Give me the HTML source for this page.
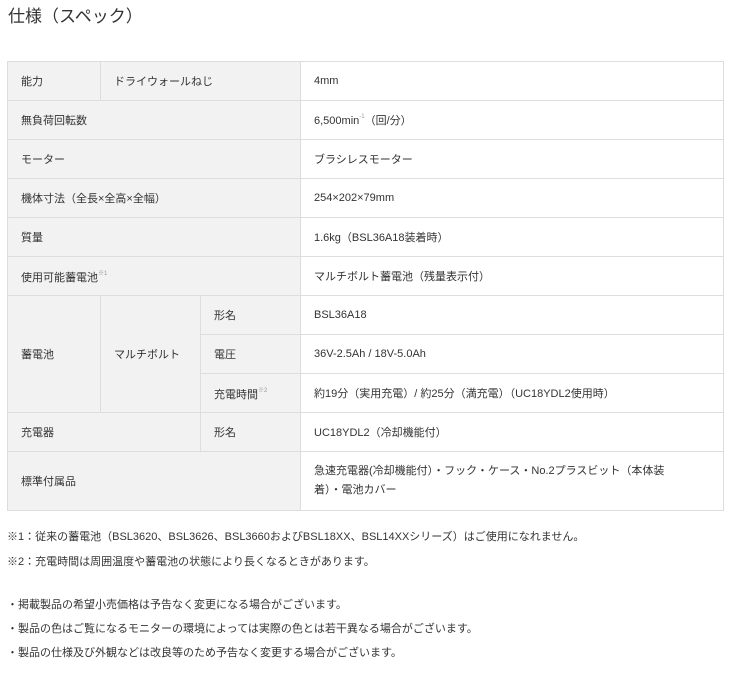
<!DOCTYPE html>
<html><head><meta charset="utf-8"><style>
body{margin:0;width:730px;height:673px;background:#fff;font-family:"Liberation Sans","Noto Sans CJK JP",sans-serif;color:#333;position:relative;overflow:hidden}
.t{position:absolute;left:8px;top:2px;font-size:17px;color:#333}
table{position:absolute;left:7px;top:61px;width:717px;border-collapse:collapse;font-size:11px;table-layout:fixed}
td{border:1px solid #ddd;padding:0 0 0 13px;height:38px;vertical-align:middle}
td.h{background:#f2f2f2}
sup{font-size:6px;color:#999;vertical-align:6px}
.n{position:absolute;left:7px;font-size:11px;white-space:nowrap}
</style></head><body>
<div class="t">仕様（スペック）</div>
<table>
<colgroup><col style="width:93px"><col style="width:100px"><col style="width:100px"><col></colgroup>
<tr><td class="h">能力</td><td class="h" colspan="2">ドライウォールねじ</td><td>4mm</td></tr>
<tr><td class="h" colspan="3">無負荷回転数</td><td>6,500min<sup>-1</sup>（回/分）</td></tr>
<tr><td class="h" colspan="3">モーター</td><td>ブラシレスモーター</td></tr>
<tr><td class="h" colspan="3">機体寸法（全長×全高×全幅）</td><td>254×202×79mm</td></tr>
<tr><td class="h" colspan="3">質量</td><td>1.6kg（BSL36A18装着時）</td></tr>
<tr><td class="h" colspan="3">使用可能蓄電池<sup>※1</sup></td><td>マルチボルト蓄電池（残量表示付）</td></tr>
<tr><td class="h" rowspan="3">蓄電池</td><td class="h" rowspan="3">マルチボルト</td><td class="h">形名</td><td>BSL36A18</td></tr>
<tr><td class="h">電圧</td><td>36V-2.5Ah / 18V-5.0Ah</td></tr>
<tr><td class="h">充電時間<sup>※2</sup></td><td>約19分（実用充電）/ 約25分（満充電）（UC18YDL2使用時）</td></tr>
<tr><td class="h" colspan="2">充電器</td><td class="h">形名</td><td>UC18YDL2（冷却機能付）</td></tr>
<tr><td class="h" colspan="3" style="height:58px">標準付属品</td><td style="line-height:19px">急速充電器(冷却機能付）・フック・ケース・No.2プラスビット（本体装<br>着）・電池カバー</td></tr>
</table>
<div class="n" style="top:528px">※1：従来の蓄電池（BSL3620、BSL3626、BSL3660およびBSL18XX、BSL14XXシリーズ）はご使用になれません。</div>
<div class="n" style="top:553px">※2：充電時間は周囲温度や蓄電池の状態により長くなるときがあります。</div>
<div class="n" style="top:596px">・掲載製品の希望小売価格は予告なく変更になる場合がございます。</div>
<div class="n" style="top:620px">・製品の色はご覧になるモニターの環境によっては実際の色とは若干異なる場合がございます。</div>
<div class="n" style="top:644px">・製品の仕様及び外観などは改良等のため予告なく変更する場合がございます。</div>
</body></html>
